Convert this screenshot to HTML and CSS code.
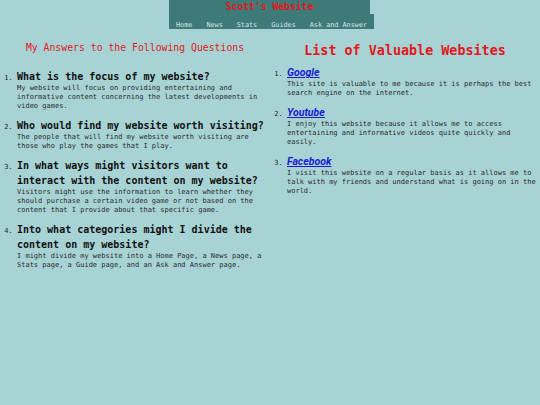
FILE: index.html
```html
<!DOCTYPE html>
<html lang="en">
<head>
<meta charset="utf-8">
<title>Scott's Website</title>
<link rel="stylesheet" href="styles.css">
</head>
<body>
<header class="site-header">
  <div class="site-title">Scott's Website</div>
  <nav class="site-nav">
    <a href="#">Home</a><a href="#">News</a><a href="#">Stats</a><a href="#">Guides</a><a href="#">Ask and Answer</a>
  </nav>
</header>
<main class="columns">
  <section class="col col-left">
    <h2 class="left-title">My Answers to the Following Questions</h2>
    <ol class="qa-list">
      <li>
        <h3 class="question">What is the focus of my website?</h3>
        <p class="answer">My website will focus on providing entertaining and informative content concerning the latest developments in video games.</p>
      </li>
      <li>
        <h3 class="question">Who would find my website worth visiting?</h3>
        <p class="answer">The people that will find my website worth visiting are those who play the games that I play.</p>
      </li>
      <li>
        <h3 class="question">In what ways might visitors want to interact with the content on my website?</h3>
        <p class="answer">Visitors might use the information to learn whether they should purchase a certain video game or not based on the content that I provide about that specific game.</p>
      </li>
      <li>
        <h3 class="question">Into what categories might I divide the content on my website?</h3>
        <p class="answer">I might divide my website into a Home Page, a News page, a Stats page, a Guide page, and an Ask and Answer page.</p>
      </li>
    </ol>
  </section>
  <section class="col col-right">
    <h1 class="right-title">List of Valuable Websites</h1>
    <ol class="site-list">
      <li>
        <a class="site-link" href="#">Google</a>
        <p class="answer">This site is valuable to me because it is perhaps the best search engine on the internet.</p>
      </li>
      <li>
        <a class="site-link" href="#">Youtube</a>
        <p class="answer">I enjoy this website because it allows me to access entertaining and informative videos quite quickly and easily.</p>
      </li>
      <li>
        <a class="site-link" href="#">Facebook</a>
        <p class="answer">I visit this website on a regular basis as it allows me to talk with my friends and understand what is going on in the world.</p>
      </li>
    </ol>
  </section>
</main>
</body>
</html>
```
FILE: styles.css
```css
html, body {
  margin: 0;
  padding: 0;
}
body {
  background: #a7d3d5;
  font-family: "DejaVu Sans Mono", "Liberation Mono", monospace;
  color: #222;
}
.site-header {
  display: flex;
  flex-direction: column;
  align-items: flex-start;
  margin-left: 169px;
}
.site-title {
  width: 201px;
  height: 14px;
  background: #3e7a78;
  color: #e0161e;
  font-size: 9.7px;
  font-weight: bold;
  line-height: 14px;
  text-align: center;
}
.site-nav {
  display: flex;
  background: #3e7a78;
  height: 15px;
  align-items: flex-start;
}
.site-nav a {
  color: #d8e4e4;
  text-decoration: none;
  font-size: 6.8px;
  line-height: 8px;
  padding: 7px 7px 0 7px;
}
.columns {
  display: flex;
}
.col {
  width: 270px;
  box-sizing: border-box;
}
.left-title {
  margin: 12px 0 0 0;
  font-size: 9.8px;
  line-height: 14px;
  font-weight: normal;
  color: #e3161c;
  text-align: center;
}
.right-title {
  margin: 13px 0 0 0;
  font-size: 13.4px;
  line-height: 18px;
  font-weight: bold;
  color: #e3161c;
  text-align: center;
}
.qa-list, .site-list {
  margin: 0;
  padding-left: 17px;
  font-size: 7px;
  line-height: 9px;
}
.qa-list {
  margin-top: 14px;
  padding-right: 0;
}
.site-list {
  margin-top: 6px;
  padding-right: 4px;
}
.qa-list li + li {
  margin-top: 7px;
}
.site-list li + li {
  margin-top: 8px;
}
.question {
  margin: 0;
  font-size: 10px;
  line-height: 15px;
  font-weight: bold;
  color: #111;
}
.answer {
  margin: 0;
  color: #2a2a2a;
}
.qa-list .answer {
  padding-right: 8px;
}
.site-link {
  display: block;
  font-family: Roboto, "Liberation Sans", sans-serif;
  font-style: italic;
  font-weight: bold;
  font-size: 10.5px;
  line-height: 14px;
  color: #1a1ad0;
}
```
